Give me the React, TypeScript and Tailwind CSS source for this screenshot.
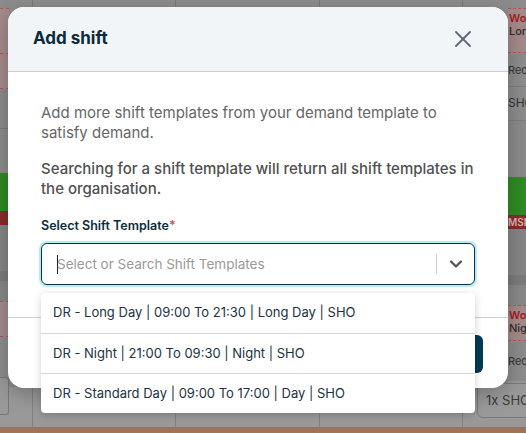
import { X, ChevronDown } from 'lucide-react';

const options = [
  'DR - Long Day | 09:00 To 21:30 | Long Day | SHO',
  'DR - Night | 21:00 To 09:30 | Night | SHO',
  'DR - Standard Day | 09:00 To 17:00 | Day | SHO',
];

/** Dimmed schedule grid that sits behind the dialog. */
function Backdrop() {
  return (
    <div className="flex h-full w-full flex-col bg-[#8c8c8c]">
      <div className="flex h-[7px] shrink-0">
        <div className="w-[33px] border-r border-[#7a7a7a]" />
        <div className="w-[143px] border-r border-[#7a7a7a]" />
        <div className="w-[144px] border-r border-[#7a7a7a]" />
        <div className="w-[143px] border-r border-[#7a7a7a]" />
        <div className="flex-1" />
      </div>
      <div className="flex flex-1">
        {/* left strip */}
        <div className="flex w-[9px] flex-col">
          <div className="mt-[1px] h-[46px] border-y border-dashed border-[#b35656] bg-[#a58a8a]" />
          <div className="h-[35px] border-b border-dashed border-[#b35656] bg-[#a58a8a]" />
          <div className="h-[40px] border-b border-[#7c7c7c]" />
          <div className="h-[44px]" />
          <div className="h-[38px] bg-[#2f8a24]" />
          <div className="h-[14px] bg-[#8a2b2b]" />
          <div className="h-[46px] bg-[#858585]" />
          <div className="h-[10px] bg-[#7b7b7b]" />
          <div className="h-[20px] bg-[#888]" />
          <div className="h-[36px] border-y border-dashed border-[#b35656] bg-[#a58a8a]" />
          <div className="h-[40px] bg-[#8d8d8d]" />
          <div className="h-[38px] rounded-r border border-l-0 border-[#777] bg-[#999]" />
          <div className="flex-1 bg-[#999]" />
        </div>
        <div className="flex flex-1 flex-col">
          <div className="flex-1" />
          <div className="flex h-[40px] bg-[#999]">
            <div className="w-[24px] border-r border-[#808080]" />
            <div className="w-[143px] border-r border-[#808080]" />
            <div className="w-[144px] border-r border-[#808080]" />
            <div className="w-[143px] border-r border-[#808080]" />
            <div className="flex-1" />
          </div>
        </div>
        {/* right strip */}
        <div className="flex w-[18px] flex-col text-[11px] font-semibold leading-[13px] [font-family:Inter,sans-serif]">
          <div className="mt-[1px] h-[45px] overflow-hidden border-y border-dashed border-[#b35656] bg-[#a58a8a] pl-[1px] pt-[3px]">
            <div className="text-[#a31d1d]">Wo</div>
            <div className="font-medium text-[#2f2f2f]">Lon</div>
          </div>
          <div className="h-[34px] overflow-hidden border-b border-[#7c7c7c] pt-[11px] font-normal text-[#333]">Requ</div>
          <div className="h-[34px] overflow-hidden border-b border-[#7c7c7c] pt-[9px] text-[12px] font-normal text-[#333]">SHO</div>
          <div className="h-[56px] bg-[#8a8a8a]" />
          <div className="h-[38px] bg-[#2f8a24]" />
          <div className="h-[14px] overflow-hidden bg-[#8a2b2b] pt-[1px] text-[10px] text-[#d9b3b3]">MSN</div>
          <div className="h-[46px] bg-[#858585]" />
          <div className="h-[10px] bg-[#7b7b7b]" />
          <div className="h-[20px] bg-[#888]" />
          <div className="h-[36px] overflow-hidden border-y border-dashed border-[#b35656] bg-[#a58a8a] pl-[1px] pt-[3px]">
            <div className="text-[#a31d1d]">Wo</div>
            <div className="font-medium text-[#2f2f2f]">Nig</div>
          </div>
          <div className="h-[40px] overflow-hidden pt-[14px] font-normal text-[#333]">Requ</div>
          <div className="h-[38px] bg-[#999]" />
          <div className="flex-1 bg-[#999]" />
        </div>
      </div>
      <div className="h-[6px] shrink-0 bg-[#9b7650]" />
    </div>
  );
}

export default function App() {
  return (
    <div className="relative h-[433px] w-[526px] overflow-hidden [font-family:Inter,'Open_Sans',sans-serif]">
      <Backdrop />

      {/* "1x SHO" chip peeking out on the right */}
      <div className="absolute left-[477px] top-[383px] flex h-[35px] w-[60px] items-center rounded-md border border-[#7a7a7a] bg-[#9a9a9a] pl-[8px] text-[13px] text-[#3a3a3a]">
        1x SHO
      </div>

      {/* dialog */}
      <div className="absolute left-[8px] top-[7px] flex h-[381px] w-[500px] flex-col overflow-hidden rounded-2xl bg-white shadow-[0_6px_20px_rgba(0,0,0,0.25)]">
        <div className="flex h-[65px] shrink-0 items-center justify-between border-b border-[#c9cdd1] bg-[#f1f5f8] pl-[25px] pr-[31px]">
          <h2 className="text-[17px] font-bold text-[#0b2a3a]">Add shift</h2>
          <X size={28} strokeWidth={1.6} className="text-[#5f6b76]" />
        </div>

        <div className="px-[33px] pb-[32px] pt-[31px]">
          <p className="text-[15px] leading-[20px] text-[#666]">
            Add more shift templates from your demand template to satisfy demand.
          </p>
          <p className="mt-[16px] text-[15px] font-medium leading-[20px] text-[#505050]">
            Searching for a shift template will return all shift templates in the organisation.
          </p>
          <label className="mt-[18px] block text-[12.5px] font-semibold leading-[18px] text-[#0d2d3d]">
            Select Shift Template<span className="text-[#e0485a]">*</span>
          </label>
          <div className="mt-[8px] flex h-[42px] items-center rounded-md border border-[#0c2f42] shadow-[0_0_0_2px_#b3eef6]">
            <div className="flex flex-1 items-center pl-[15px] text-[13.5px] text-[#9a9a9a]">
              <span className="mr-[-1px] h-[19px] w-px bg-[#222]" />
              Select or Search Shift Templates
            </div>
            <div className="h-[20px] w-px bg-[#cccccc]" />
            <div className="flex w-[37px] items-center justify-center">
              <ChevronDown size={20} strokeWidth={2.8} className="text-[#555]" />
            </div>
          </div>
        </div>

        <div className="flex flex-1 items-start justify-end border-t border-[#cfcfcf] pr-[25px] pt-[17px]">
          <button className="h-[38px] rounded-md bg-[#003a52] px-[22px] text-[14px] font-semibold text-white">
            Add shift
          </button>
        </div>
      </div>

      {/* open select menu */}
      <ul className="absolute left-[41px] top-[293px] w-[434px] rounded bg-white shadow-[0_2px_8px_rgba(0,0,0,0.18)]">
        {options.map((o, i) => (
          <li
            key={o}
            className={`flex h-[40px] items-center px-[12px] text-[13px] text-[#1b3242] ${
              i > 0 ? 'border-t border-[#d6d6d6]' : ''
            }`}
          >
            {o}
          </li>
        ))}
      </ul>
    </div>
  );
}
